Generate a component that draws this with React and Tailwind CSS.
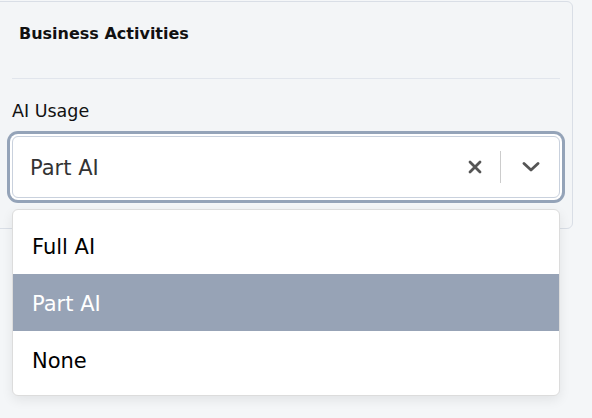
import { useState } from "react";

const options = ["Full AI", "Part AI", "None"];

function ClearIcon() {
    return (
        <svg width="14" height="14" viewBox="0 0 14 14" fill="none">
            <path d="M2 2L12 12M12 2L2 12" stroke="#555" strokeWidth="2.8" strokeLinecap="round" />
        </svg>
    );
}

function ChevronIcon() {
    return (
        <svg width="18" height="10" viewBox="0 0 18 10" fill="none">
            <path d="M2 1.5L9 8L16 1.5" stroke="#555" strokeWidth="2.8" strokeLinecap="round" strokeLinejoin="round" />
        </svg>
    );
}

export default function App() {
    const [value, setValue] = useState("Part AI");

    return (
        <div className="min-h-[418px] w-[592px] bg-[#f4f6f8] pt-px font-['DejaVu_Sans',sans-serif]">
            <div className="relative -ml-px w-[574px] rounded-r-md border border-[#d9dee6] bg-[#f3f5f7] px-3 pb-[30px]">
                <div className="px-[7px] pt-[20px] pb-[32px] text-[16px] leading-6 font-bold text-[#111]">
                    Business Activities
                </div>
                <div className="h-px bg-[#e1e5ec]" />
                <div className="pt-[21px] pb-[14px] text-[17.5px] leading-[22px] text-[#111]">AI Usage</div>
                <div className="flex h-[62px] items-center rounded-md border border-[#c9d1dd] bg-white ring-[3px] ring-[#94a3b8] ring-offset-[2px] ring-offset-white">
                    <div className="flex-1 pt-1 pl-[17px] text-[21px] text-[#333]">{value}</div>
                    <button className="flex h-full items-center px-[9px]" onClick={() => setValue("")}>
                        <ClearIcon />
                    </button>
                    <div className="mx-[9px] h-[32px] w-px bg-[#cccccc]" />
                    <div className="flex h-full items-center pr-[19px] pl-[12px]">
                        <ChevronIcon />
                    </div>
                </div>

                <div className="absolute top-[207px] left-3 right-3 z-10 rounded-md border border-[#dcdcdc] bg-white py-[7px] shadow-[0_4px_12px_rgba(0,0,0,0.08)]">
                    {options.map((o) => (
                        <div
                            key={o}
                            onClick={() => setValue(o)}
                            className={
                                o === value
                                    ? "flex h-[57px] items-center bg-[#97a3b6] pt-1 pl-[19px] text-[21px] text-white"
                                    : "flex h-[57px] items-center pt-1 pl-[19px] text-[21px] text-black"
                            }
                        >
                            {o}
                        </div>
                    ))}
                </div>
            </div>
        </div>
    );
}
